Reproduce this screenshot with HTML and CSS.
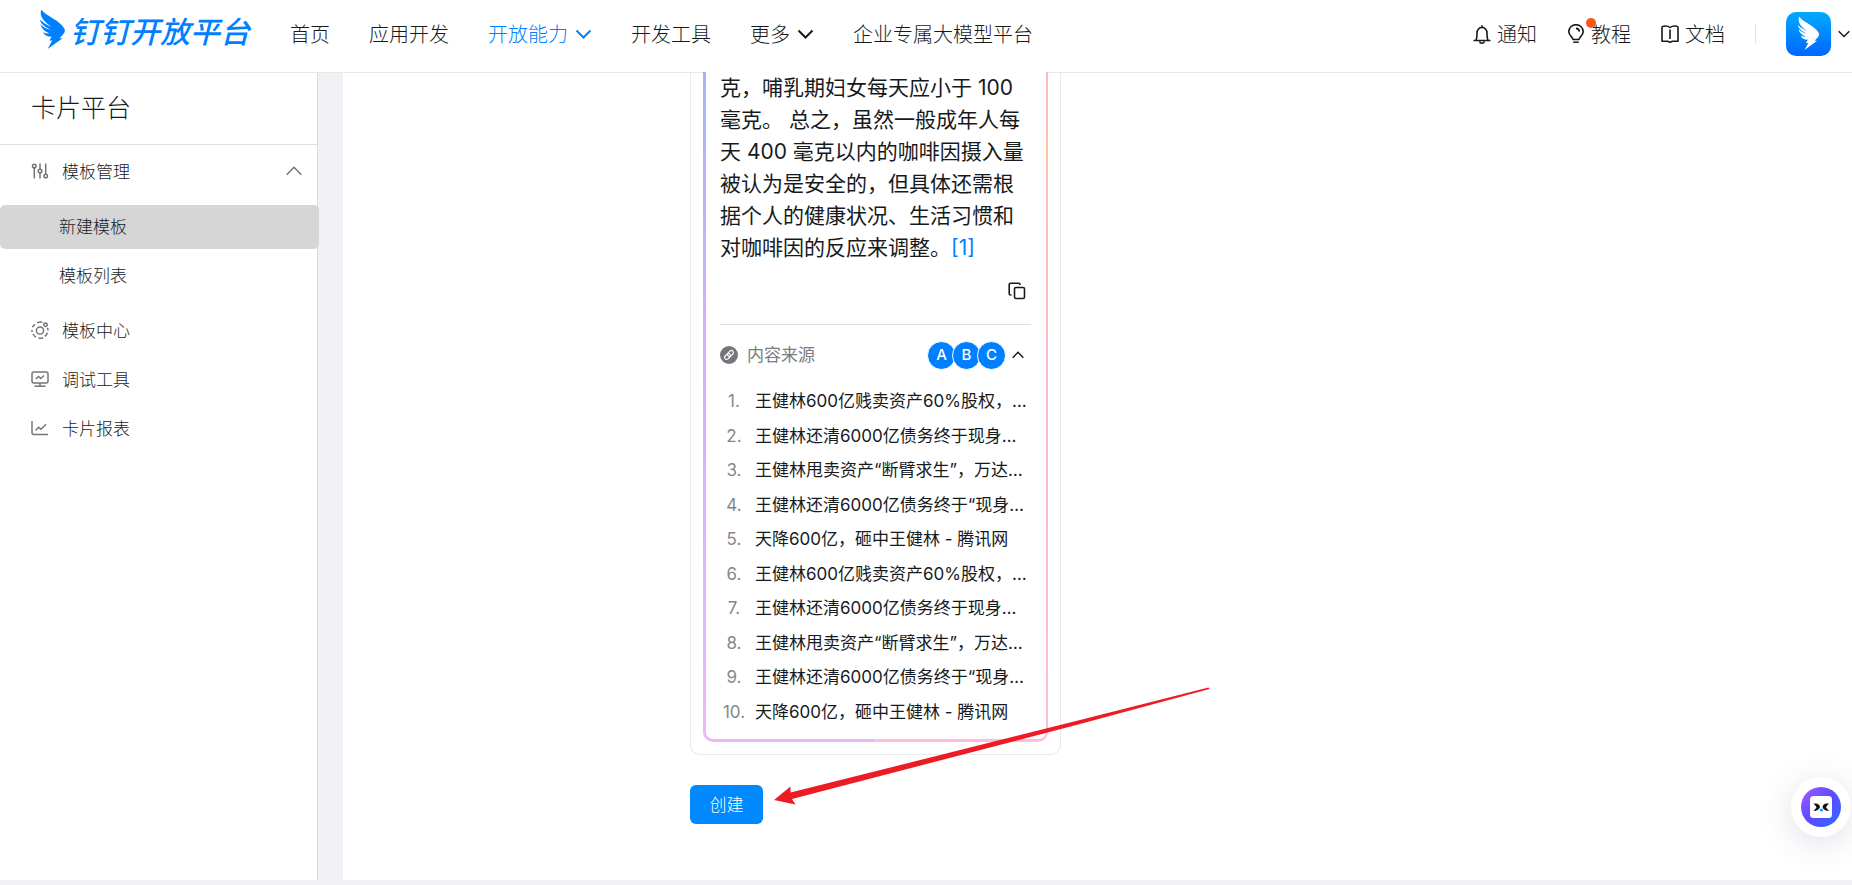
FILE: index.html
```html
<!DOCTYPE html>
<html lang="zh-CN">
<head>
<meta charset="utf-8">
<meta name="viewport" content="width=device-width, initial-scale=1">
<title>卡片平台</title>
<link rel="stylesheet" href="styles.css">
</head>
<body>
<svg class="defs" aria-hidden="true">
  <symbol id="wing" viewBox="0 0 26 39">
    <path d="M2 0C4 5 20 10 24.5 19C25.4 20.6 24.6 22.6 23.2 24.2L19.6 28.2H22.6L7.6 39L12.2 30.6H9.4L11.6 26.8C7.6 26.8 4.4 25.2 3 22.2C5 23.2 7.4 23.6 9.6 23.4C5 21.8 1.4 18.8 .6 14.6C3 17 6.6 19 10.4 19.8C4.6 17 .2 13.4 0 9.6C2 11.8 7 15.4 12 17.2C6 13.4 -.2 8 .8 1.4C1 .4 1.6 -.2 2 0Z"/>
  </symbol>
</svg>
<header class="header">
  <a class="logo" href="#">
    <svg class="logo-mark" aria-hidden="true"><use href="#wing"/></svg>
    <span>钉钉开放平台</span>
  </a>
  <nav class="nav">
    <a href="#">首页</a>
    <a href="#">应用开发</a>
    <a class="current" href="#">开放能力<svg class="caret" viewBox="0 0 17 12"><path d="M1.5 2.5l7 7 7-7"/></svg></a>
    <a href="#">开发工具</a>
    <a href="#">更多<svg class="caret" viewBox="0 0 17 12"><path d="M1.5 2.5l7 7 7-7"/></svg></a>
    <a href="#">企业专属大模型平台</a>
  </nav>
  <div class="tools">
    <a href="#"><svg class="tool-icon" viewBox="0 0 18 20"><path d="M.5 16.5h17M3 16c1-1.500 1-3.500 1-7a5 5.600 0 0 1 10 0c0 3.500 0 5.500 1 7M9 3.500V1.200M6.800 17.500a2.200 1.700 0 0 0 4.400 0"/></svg>通知</a>
    <a class="has-dot" href="#"><svg class="tool-icon" viewBox="0 0 18 20"><path d="M6 15.500c0-2.500-4.200-3.700-4.200-7.800a7.200 7 0 0 1 14.400 0c0 4.100-4.200 5.300-4.200 7.800zM6.300 18.300h5.400M9 4.400a3.600 3.600 0 0 1 3.400 3.200"/></svg>教程</a>
    <a href="#"><svg class="tool-icon" viewBox="0 0 18 20"><path d="M9 3.500C7.500 2.300 4.500 1.800 2.300 2.200Q1 2.300 1 3.500V17.200H6.500L9 18.200L11.500 17.200H17V3.500Q17 2.300 15.700 2.200C13.500 1.800 10.500 2.300 9 3.500zM9 5.500v9.500"/></svg>文档</a>
    <span class="divider"></span>
    <button class="account" type="button" aria-label="账号">
      <span class="avatar"><svg aria-hidden="true"><use href="#wing"/></svg></span>
      <svg class="account-caret" viewBox="0 0 12 8"><path d="M.7 1.200l5.300 5.300 5.300-5.300"/></svg>
    </button>
  </div>
</header>
<div class="body">
  <aside class="sidebar">
    <h1 class="side-title">卡片平台</h1>
    <nav class="menu">
      <button class="menu-item group" type="button" aria-expanded="true">
        <svg class="menu-icon" viewBox="0 0 18 18"><circle cx="3.300" cy="4" r="1.800"/><circle cx="9" cy="9" r="1.800"/><circle cx="14.700" cy="14" r="1.800"/><path d="M3.300 6v10.500M9 1.500v5.700M9 10.800v5.700M14.700 1.500v10.700"/></svg>
        <span>模板管理</span>
        <svg class="fold" viewBox="0 0 16 10"><path d="M.7 8.700L8 1.300l7.300 7.400"/></svg>
      </button>
      <div class="submenu">
        <a class="sub-item active" href="#">新建模板</a>
        <a class="sub-item" href="#">模板列表</a>
      </div>
      <a class="menu-item" href="#"><svg class="menu-icon" viewBox="0 0 18 18"><circle cx="9" cy="9.500" r="3.600"/><circle cx="14.500" cy="3.700" r="1.700"/><path d="M11.500 1.400A8 8 0 0 0 6 1.900M3.800 3.300A8 8 0 0 0 1.500 6.300M1 9v2M2 13a8 8 0 0 0 3 3.200M7.500 17.100a8 8 0 0 0 4.500-.4M14 15.400a8 8 0 0 0 2.500-3.600M17 9.600a8 8 0 0 0-.5-2.800"/></svg><span>模板中心</span></a>
      <a class="menu-item" href="#"><svg class="menu-icon" viewBox="0 0 18 18"><rect x="1" y="2" width="16" height="11" rx="2"/><path d="M4.800 9l2.700-2.500 2.200 2L13 5.500M9 13v3M3.500 16.300h11"/></svg><span>调试工具</span></a>
      <a class="menu-item" href="#"><svg class="menu-icon" viewBox="0 0 18 18"><path d="M1 2v12q0 1.500 1.500 1.500H17M4.500 11.500l3.200-3.200 2.300 2L15 5.300"/></svg><span>卡片报表</span></a>
    </nav>
  </aside>
  <main class="main">
    <section class="preview">
      <div class="ai-card">
        <p class="answer">克，哺乳期妇女每天应小于 100<br>毫克。 总之，虽然一般成年人每<br>天 400 毫克以内的咖啡因摄入量<br>被认为是安全的，但具体还需根<br>据个人的健康状况、生活习惯和<br>对咖啡因的反应来调整。<a href="#">[1]</a></p>
        <button class="copy" type="button" aria-label="复制"><svg viewBox="0 0 18 18"><rect x="6.500" y="5.500" width="10" height="11" rx="1.500"/><path d="M3.500 13H2.500Q1.200 13 1.200 11.700V2.500Q1.200 1.200 2.500 1.200h8.200Q12 1.200 12 2.500v.5"/></svg></button>
        <div class="source">
          <svg class="link-icon" viewBox="0 0 18 18"><circle cx="9" cy="9" r="9"/><g transform="rotate(-45 9 9)"><rect x="3.600" y="7" width="6.600" height="4" rx="2"/><rect x="7.800" y="7" width="6.600" height="4" rx="2"/></g></svg>
          <span class="source-name">内容来源</span>
          <span class="badges"><b>A</b><b>B</b><b>C</b></span>
          <svg class="source-fold" viewBox="0 0 12 8"><path d="M.7 6.700L6 1.300l5.300 5.400"/></svg>
        </div>
        <ol class="refs">
          <li><i>1.</i><span>王健林600亿贱卖资产60%股权，…</span></li>
          <li><i>2.</i><span>王健林还清6000亿债务终于现身…</span></li>
          <li><i>3.</i><span>王健林甩卖资产“断臂求生”，万达…</span></li>
          <li><i>4.</i><span>王健林还清6000亿债务终于“现身…</span></li>
          <li><i>5.</i><span>天降600亿，砸中王健林 - 腾讯网</span></li>
          <li><i>6.</i><span>王健林600亿贱卖资产60%股权，…</span></li>
          <li><i>7.</i><span>王健林还清6000亿债务终于现身…</span></li>
          <li><i>8.</i><span>王健林甩卖资产“断臂求生”，万达…</span></li>
          <li><i>9.</i><span>王健林还清6000亿债务终于“现身…</span></li>
          <li><i>10.</i><span>天降600亿，砸中王健林 - 腾讯网</span></li>
        </ol>
      </div>
    </section>
    <div class="actions">
      <button class="create" type="button">创建</button>
      <svg class="arrow" viewBox="0 0 436 120" aria-hidden="true"><path d="M0 114L16.500 100.500L16.500 106.500L306 34L434.500 1.500L435.500 3L306 38L18 113L21.500 118.500Z"/></svg>
    </div>
  </main>
</div>
<button class="assistant" type="button" aria-label="助手">
  <svg viewBox="0 0 40 40"><defs><linearGradient id="orb" x1="0" y1="0" x2="1" y2="1"><stop offset="0" stop-color="#a65bff"/><stop offset=".5" stop-color="#5a4bff"/><stop offset="1" stop-color="#2f6bff"/></linearGradient></defs><circle cx="20" cy="20" r="20" fill="url(#orb)"/><rect x="9" y="9" width="22" height="22" rx="3.500" fill="#fff"/><path d="M12.500 16.500h2.500q3.200 0 4 3.500-1 3.700-6.500 4 1.500-2 3-3.500Q14.500 18.500 12.500 16.500zM28 16.500h-2.500q-3.200 0-4 3.500 1 3.700 6.500 4-1.500-2-3-3.500Q26 18.500 28 16.500z" fill="#111"/><circle cx="20.500" cy="23" r="1.600" fill="#1e9bff"/></svg>
</button>
</body>
</html>
```
FILE: styles.css
```css
* { box-sizing: border-box; }
body {
  margin: 0;
  height: 100vh;
  display: flex;
  flex-direction: column;
  padding-bottom: 5px;
  overflow: hidden;
  background: #f0f0f5;
  color: #171a1d;
  font-family: "Noto Sans CJK SC", sans-serif;
  font-weight: 300;
}
a { color: inherit; text-decoration: none; }
button { border: 0; padding: 0; background: none; color: inherit; font: inherit; cursor: pointer; }
svg { display: block; flex: none; fill: none; stroke: currentColor; }
.defs { position: absolute; width: 0; height: 0; }

.header {
  flex: none;
  display: flex;
  align-items: center;
  height: 73px;
  padding: 0 2px 5px 40px;
  background: #fff;
  border-bottom: 1px solid #e7e7ea;
  font-size: 20px;
  line-height: 30px;
}
.logo {
  display: flex;
  align-items: center;
  gap: 4px;
  width: 250px;
  color: #0080ff;
  font-size: 30px;
  font-style: italic;
  font-weight: 500;
  white-space: nowrap;
  padding-bottom: 8px;
}
.logo-mark { width: 26px; height: 39px; fill: currentColor; stroke: none; }
.nav { display: flex; gap: 39px; white-space: nowrap; }
.nav a { display: flex; align-items: center; gap: 7px; }
.nav .current { color: #0080ff; }
.caret { width: 17px; height: 12px; stroke-width: 2; }
.tools { display: flex; align-items: center; gap: 30px; margin-left: auto; white-space: nowrap; }
.tools a { display: flex; align-items: center; gap: 6px; }
.tool-icon { width: 18px; height: 20px; stroke-width: 1.6; stroke-linejoin: round; }
.has-dot { position: relative; }
.has-dot::after {
  content: "";
  position: absolute;
  left: 19px;
  top: -1px;
  width: 10px;
  height: 10px;
  border-radius: 50%;
  background: #ff5219;
}
.divider { width: 1px; height: 20px; background: #e2e3e5; }
.account { display: flex; align-items: center; gap: 7px; }
.avatar {
  display: grid;
  place-items: center;
  width: 45px;
  height: 44px;
  border-radius: 10px;
  background: linear-gradient(#00aaff, #0066ff);
}
.avatar svg { width: 22px; height: 33px; fill: #fff; stroke: none; }
.account-caret { width: 12px; height: 8px; stroke-width: 1.4; }

.body { flex: 1; min-height: 0; display: flex; gap: 25px; }
.sidebar { flex: none; width: 318px; background: #fff; border-right: 1px solid #dcdce0; }
.side-title {
  margin: 0;
  padding: 13px 31px 18px;
  border-bottom: 1px solid #dfdfe1;
  font-size: 25px;
  font-weight: 300;
  line-height: 40px;
}
.menu { font-size: 17px; line-height: 24px; }
.menu-item { display: flex; align-items: center; gap: 13px; width: 100%; height: 49px; padding: 0 15px 0 31px; }
.menu-item.group { height: 54px; padding-bottom: 2px; }
.menu-icon { width: 18px; height: 18px; color: #73757a; stroke-width: 1.5; }
.fold { width: 16px; height: 10px; margin-left: auto; color: #73757a; stroke-width: 1.5; }
.submenu { display: grid; gap: 5px; padding: 6px 0 7px; margin-right: -2px; }
.sub-item { position: relative; padding: 9px 59px 11px; border-radius: 5px; }
.sub-item.active { background: #d6d6d6; }

.main { flex: 1; min-width: 0; padding-left: 347px; background: #fff; }
.preview {
  width: 371px;
  padding: 0 12px 12px;
  border: solid #e9e9ec;
  border-width: 0 1px 1px;
  border-radius: 0 0 10px 10px;
}
.ai-card {
  position: relative;
  isolation: isolate;
  padding: 0 17px 14px;
  font-family: Inter, "Noto Sans CJK SC", sans-serif;
  font-weight: 400;
}
.ai-card::before {
  content: "";
  position: absolute;
  z-index: -1;
  inset: 0;
  border: solid transparent;
  border-width: 0 2px 3px 3px;
  border-radius: 0 0 10px 10px;
  background:
    linear-gradient(#fff, #fff) padding-box,
    linear-gradient(#a3b4ff, #cfb0ff 35%, #e9b8f8) left / 50% 100% no-repeat border-box,
    linear-gradient(#ffb9b9, #ffc4a0 12%, #ffbcbf 24%, #ffb9c8 60%, #ffbce0) right / 50% 100% no-repeat border-box;
}
.answer { margin: -1px 0 0; font-size: 21px; line-height: 32px; white-space: nowrap; }
.answer a { color: #0080ff; }
.copy { display: block; margin: 18px 5px 24px auto; }
.copy svg { width: 18px; height: 18px; stroke-width: 1.6; }
.source {
  display: flex;
  align-items: center;
  height: 61px;
  border-top: 1px solid #dfe0e2;
  color: #7a7c80;
  font-size: 17px;
  line-height: 24px;
}
.link-icon { width: 18px; height: 18px; margin-right: 9px; fill: #747679; stroke: none; }
.link-icon g { fill: none; stroke: #fff; stroke-width: 1.2; }
.badges { display: flex; margin-left: auto; }
.badges b {
  display: grid;
  place-items: center;
  width: 29px;
  height: 29px;
  margin-right: -4px;
  border: 1px solid #fff;
  border-radius: 50%;
  background: #0080ff;
  color: #fff;
  font-size: 15px;
  font-weight: 500;
}
.source-fold { width: 12px; height: 8px; margin: 0 7px 0 10px; color: #171a1d; stroke-width: 1.5; }
.refs {
  display: flex;
  flex-direction: column;
  justify-content: space-between;
  height: 343px;
  margin: 0;
  padding: 0;
  list-style: none;
  font-size: 17px;
  line-height: 32px;
  white-space: nowrap;
}
.refs li { display: flex; gap: 7px; }
.refs i { width: 28px; color: #85878b; font-style: normal; text-align: center; }

.actions { position: relative; width: 73px; margin-top: 30px; }
.create {
  width: 73px;
  height: 39px;
  padding-bottom: 2px;
  border-radius: 6px;
  background: #0089ff;
  color: #fff;
  font-size: 17px;
  line-height: 24px;
}
.arrow { position: absolute; left: 84px; bottom: 18px; width: 436px; height: 120px; fill: #ed1c24; stroke: none; }

.assistant {
  position: fixed;
  right: 1px;
  bottom: 48px;
  display: grid;
  place-items: center;
  width: 60px;
  height: 60px;
  border-radius: 50%;
  background: #fff;
  box-shadow: 0 6px 32px rgba(60, 70, 110, .16);
}
.assistant svg { width: 40px; height: 40px; stroke: none; }
```
